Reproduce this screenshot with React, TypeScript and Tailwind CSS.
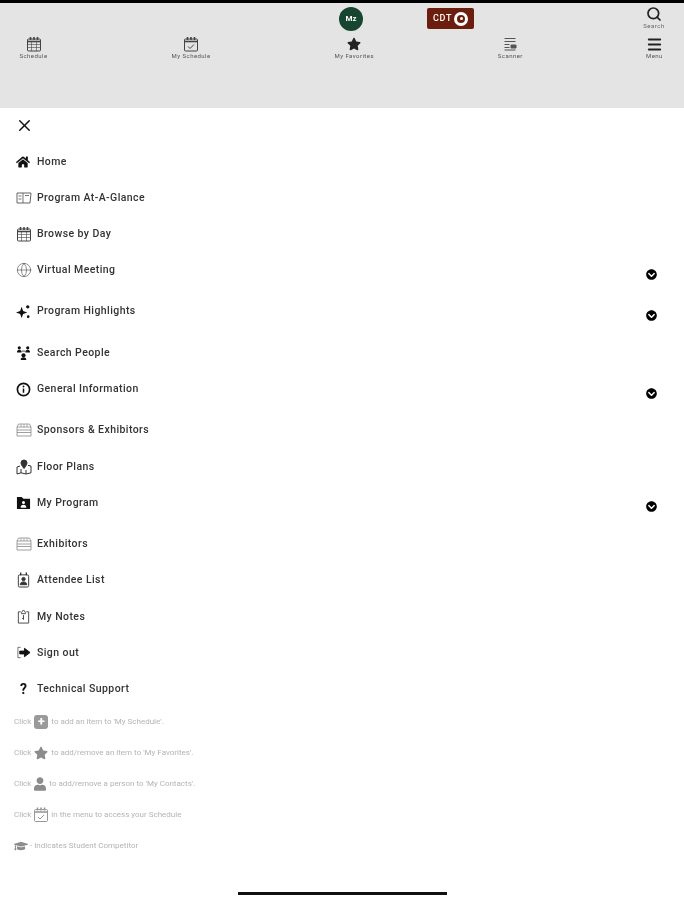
import React from "react";
import { Search, Menu, X, Globe } from "lucide-react";
import { FaHome, FaChevronCircleDown, FaStar, FaUser, FaGraduationCap } from "react-icons/fa";

type IP = { className?: string };

const CalBase = ({ className, children }: IP & { children?: React.ReactNode }) => (
  <svg viewBox="0 0 16 16" className={className} fill="none" stroke="currentColor" strokeWidth="1">
    <rect x="1.5" y="3" width="13" height="12" rx="1" />
    <path d="M1.5 5.500h13" strokeWidth="1.6" />
    <path d="M4.500 1v3M8 1v3M11.500 1v3" strokeWidth="1.600" />
    {children}
  </svg>
);
const CalGrid = ({ className }: IP) => (
  <CalBase className={className}>
    <path d="M1.500 8.500h13M1.500 11.500h13M5.500 5.500V15M10.500 5.500V15" strokeWidth=".6" />
  </CalBase>
);
const CalCheck = ({ className }: IP) => (
  <CalBase className={className}>
    <path d="M5 10.500l2 2 4-4" strokeWidth="1" />
  </CalBase>
);
const Book = ({ className }: IP) => (
  <svg viewBox="0 0 16 16" className={className} fill="none" stroke="currentColor" strokeWidth=".9">
    <path d="M1 3h14l-1 10H1z" />
    <path d="M7 3v10M2.500 6H5.500M2.500 9H5.500M9 5.500h4" strokeWidth=".8" />
  </svg>
);
const Spark = ({ className }: IP) => (
  <svg viewBox="0 0 16 16" className={className} fill="currentColor">
    <path d="M6 3l1.600 4.400L12 9l-4.400 1.600L6 15l-1.600-4.400L0 9l4.400-1.600z" />
    <circle cx="12.500" cy="3" r="1.800" />
    <circle cx="13" cy="13.500" r="1.400" />
  </svg>
);
const People = ({ className }: IP) => (
  <svg viewBox="0 0 16 16" className={className} fill="currentColor">
    <circle cx="3.500" cy="3" r="1.700" />
    <circle cx="12.500" cy="3" r="1.700" />
    <circle cx="8" cy="11" r="2.200" />
    <path d="M1 8c0-2 1-3 2.500-3S6 6 6 8zM10 8c0-2 1-3 2.500-3S15 6 15 8zM5 16c0-2 1-3 3-3s3 1 3 3z" />
    <path d="M6 6.500h4" stroke="currentColor" strokeWidth=".8" />
  </svg>
);
const InfoRing = ({ className }: IP) => (
  <svg viewBox="0 0 16 16" className={className} fill="none" stroke="currentColor">
    <circle cx="8" cy="8" r="6.500" strokeWidth="1.800" />
    <path d="M8 7v4.500" strokeWidth="1.600" />
    <circle cx="8" cy="4.800" r="1" fill="currentColor" stroke="none" />
  </svg>
);
const Booth = ({ className }: IP) => (
  <svg viewBox="0 0 16 16" className={className} fill="none" stroke="currentColor" strokeWidth=".8">
    <path d="M1 5 2.500 2h11L15 5v9H1z" />
    <path d="M1 5h14M1 8h14M1 10.500h14" />
    <path d="M5 2v3M8 2v3M11 2v3" strokeWidth=".6" />
  </svg>
);
const Floor = ({ className }: IP) => (
  <svg viewBox="0 0 16 16" className={className} fill="none" stroke="currentColor" strokeWidth="1">
    <path d="M4 7 1 8v7l4-1.200 5 1.200 5-1.200V7l-3-.6M5 10v4M10 11v4" />
    <path d="M8 1a3 3 0 0 0-3 3c0 2 3 5.500 3 5.500S11 6 11 4a3 3 0 0 0-3-3z" fill="currentColor" />
  </svg>
);
const FolderUser = ({ className }: IP) => (
  <svg viewBox="0 0 16 16" className={className} fill="currentColor">
    <path fillRule="evenodd" d="M1 2h5l2 2h7v11H1zM8 6.500a1.600 1.600 0 1 0 0 3.200 1.600 1.600 0 0 0 0-3.200zM5 13.500h6c0-2-1-3-3-3s-3 1-3 3z" />
  </svg>
);
const Badge = ({ className }: IP) => (
  <svg viewBox="0 0 16 16" className={className} fill="none" stroke="currentColor" strokeWidth="1">
    <rect x="2.500" y="2.500" width="11" height="13" rx="1.500" />
    <path d="M5 0v3M11 0v3" strokeWidth="1.400" />
    <circle cx="8" cy="7" r="1.800" fill="currentColor" />
    <path d="M4.500 13c0-2 1.500-3 3.500-3s3.500 1 3.500 3z" fill="currentColor" />
  </svg>
);
const Notes = ({ className }: IP) => (
  <svg viewBox="0 0 16 16" className={className} fill="none" stroke="currentColor" strokeWidth="1">
    <path d="M5 3H2.500v12h11V3H11" />
    <path d="M6 3.500 8 1l2 2.500V5H6zM8 6.500v5M6.500 10h2" />
  </svg>
);
const SignOut = ({ className }: IP) => (
  <svg viewBox="0 0 16 16" className={className} fill="none" stroke="currentColor" strokeWidth="1">
    <path d="M5 2.500H2v11h3" strokeOpacity=".6" />
    <path d="M4 6.500h5V3.500L15 8l-6 4.500v-3H4z" fill="currentColor" />
  </svg>
);
const Question = ({ className }: IP) => (
  <span className={`${className} flex items-center justify-center text-[14px] leading-none font-bold`}>?</span>
);

const Tab = ({ icon, label, className }: { icon: React.ReactNode; label: string; className: string }) => (
  <div className={`w-[60px] flex flex-col items-center ${className}`}>
    <div className="h-[16px] flex items-center justify-center">{icon}</div>
    <span className="text-[6px] leading-[8px] tracking-[0.45px] text-[#555]">{label}</span>
  </div>
);

const rows: { Icon: React.ComponentType<IP>; label: string; size: string; tone?: string; chev?: boolean }[] = [
  { Icon: FaHome as any, label: "Home", size: "w-[14px] h-[14px]" },
  { Icon: Book, label: "Program At-A-Glance", size: "w-[16px] h-[16px]", tone: "text-[#555]" },
  { Icon: CalGrid, label: "Browse by Day", size: "w-[16px] h-[16px]", tone: "text-[#444]" },
  { Icon: Globe as any, label: "Virtual Meeting", size: "w-[16px] h-[16px] [stroke-width:1]", tone: "text-[#555]", chev: true },
  { Icon: Spark, label: "Program Highlights", size: "w-[15px] h-[15px]", chev: true },
  { Icon: People, label: "Search People", size: "w-[15px] h-[15px]" },
  { Icon: InfoRing, label: "General Information", size: "w-[15px] h-[15px]", chev: true },
  { Icon: Booth, label: "Sponsors & Exhibitors", size: "w-[16px] h-[16px]", tone: "text-[#888]" },
  { Icon: Floor, label: "Floor Plans", size: "w-[16px] h-[16px]", tone: "text-[#333]" },
  { Icon: FolderUser, label: "My Program", size: "w-[15px] h-[15px]", chev: true },
  { Icon: Booth, label: "Exhibitors", size: "w-[16px] h-[16px]", tone: "text-[#888]" },
  { Icon: Badge, label: "Attendee List", size: "w-[15px] h-[16px]", tone: "text-[#333]" },
  { Icon: Notes, label: "My Notes", size: "w-[15px] h-[15px]", tone: "text-[#444]" },
  { Icon: SignOut, label: "Sign out", size: "w-[15px] h-[15px]" },
  { Icon: Question, label: "Technical Support", size: "w-[15px] h-[15px]" },
];

const Hint = ({ children }: { children: React.ReactNode }) => (
  <div className="h-[31px] flex items-center text-[8px] text-[#b4b4b4] whitespace-nowrap">{children}</div>
);

export default function App() {
  return (
    <div className="w-[684px] h-[900px] bg-white overflow-hidden font-['Roboto',sans-serif] blur-[0.45px]">
      <header className="h-[108px] bg-[#e4e4e4] border-t-[3px] border-black">
        <div className="h-[31px] flex items-start">
          <div className="ml-[339px] mt-[4px] w-[24px] h-[24px] rounded-full bg-[#17452f] flex items-center justify-center text-white text-[8px] font-bold">
            Mz
          </div>
          <div className="ml-[64px] mt-[5px] w-[47px] h-[21px] rounded-[2px] bg-[#6b1d0e] flex items-center justify-center gap-[2px] text-white text-[9px] font-medium tracking-[0.7px]">
            CDT
            <span className="w-[14px] h-[14px] rounded-full border-[3px] border-white flex items-center justify-center">
              <span className="w-[3px] h-[3px] bg-white rounded-full" />
            </span>
          </div>
          <div className="ml-[165px] mt-[3px] w-[30px] flex flex-col items-center">
            <Search className="w-[16px] h-[16px] text-[#222]" strokeWidth={2.6} />
            <span className="text-[6px] leading-[8px] tracking-[0.5px] text-[#666]">Search</span>
          </div>
        </div>
        <div className="flex mt-[2px]">
          <Tab className="ml-[4px]" label="Schedule" icon={<CalGrid className="w-[16px] h-[16px] text-[#444]" />} />
          <Tab className="ml-[98.5px]" label="My Schedule" icon={<CalCheck className="w-[16px] h-[16px] text-[#444]" />} />
          <Tab className="ml-[104px]" label="My Favorites" icon={<FaStar className="w-[14px] h-[14px] text-[#222]" />} />
          <Tab
            className="ml-[97px]"
            label="Scanner"
            icon={
              <svg viewBox="0 0 14 14" className="w-[14px] h-[14px] text-[#555]" fill="none" stroke="currentColor" strokeWidth="1">
                <path d="M1.500 1.500h11M1.500 4.500h11M1.500 7.500h5M1.500 10.500h5M1.500 13h11" />
                <path d="M8 8h5v3H8z" fill="currentColor" />
              </svg>
            }
          />
          <Tab className="ml-[85px]" label="Menu" icon={<Menu className="w-[17px] h-[17px] text-[#222]" strokeWidth={2.8} />} />
        </div>
      </header>

      <main className="pl-[16px] pr-[27px]">
        <X className="w-[19px] h-[19px] -ml-[1px] mt-[8px] text-[#111]" strokeWidth={1.8} />
        <div className="mt-[18.5px]">
          {rows.map(({ Icon, label, size, tone, chev }) => (
            <div key={label} className={`flex items-start ${chev ? "h-[41.4px]" : "h-[36.2px]"}`}>
              <div className="w-[21px] h-[16px] flex items-center">
                <Icon className={`${size} ${tone ?? "text-[#111]"}`} />
              </div>
              <span className="text-[10.5px] leading-[16px] tracking-[0.42px] font-medium text-[#333]">{label}</span>
              {chev && <FaChevronCircleDown className="ml-auto mt-[6.5px] w-[11px] h-[11px] text-black" />}
            </div>
          ))}
        </div>
        <div className="-mt-[11px] -ml-[2px]">
          <Hint>
            Click <span className="mx-[3px] w-[14px] h-[14px] rounded-[3px] bg-[#9a9a9a] flex items-center justify-center text-white text-[13px] font-bold leading-none">+</span> to add an item to 'My Schedule'.
          </Hint>
          <Hint>
            Click <FaStar className="mx-[3px] w-[14px] h-[14px] text-[#8c8c8c]" /> to add/remove an item to 'My Favorites'.
          </Hint>
          <Hint>
            Click <FaUser className="mx-[3px] w-[12px] h-[14px] text-[#8c8c8c]" /> to add/remove a person to 'My Contacts'.
          </Hint>
          <Hint>
            Click <CalCheck className="mx-[2px] w-[16px] h-[17px] text-[#999]" /> in the menu to access your Schedule
          </Hint>
          <Hint>
            <FaGraduationCap className="mr-[2px] w-[14px] h-[14px] text-[#8c8c8c]" /> - Indicates Student Competitor
          </Hint>
        </div>
      </main>

      <div className="mt-[31px] mx-auto w-[209px] h-[3px] bg-[#111]" />
    </div>
  );
}
